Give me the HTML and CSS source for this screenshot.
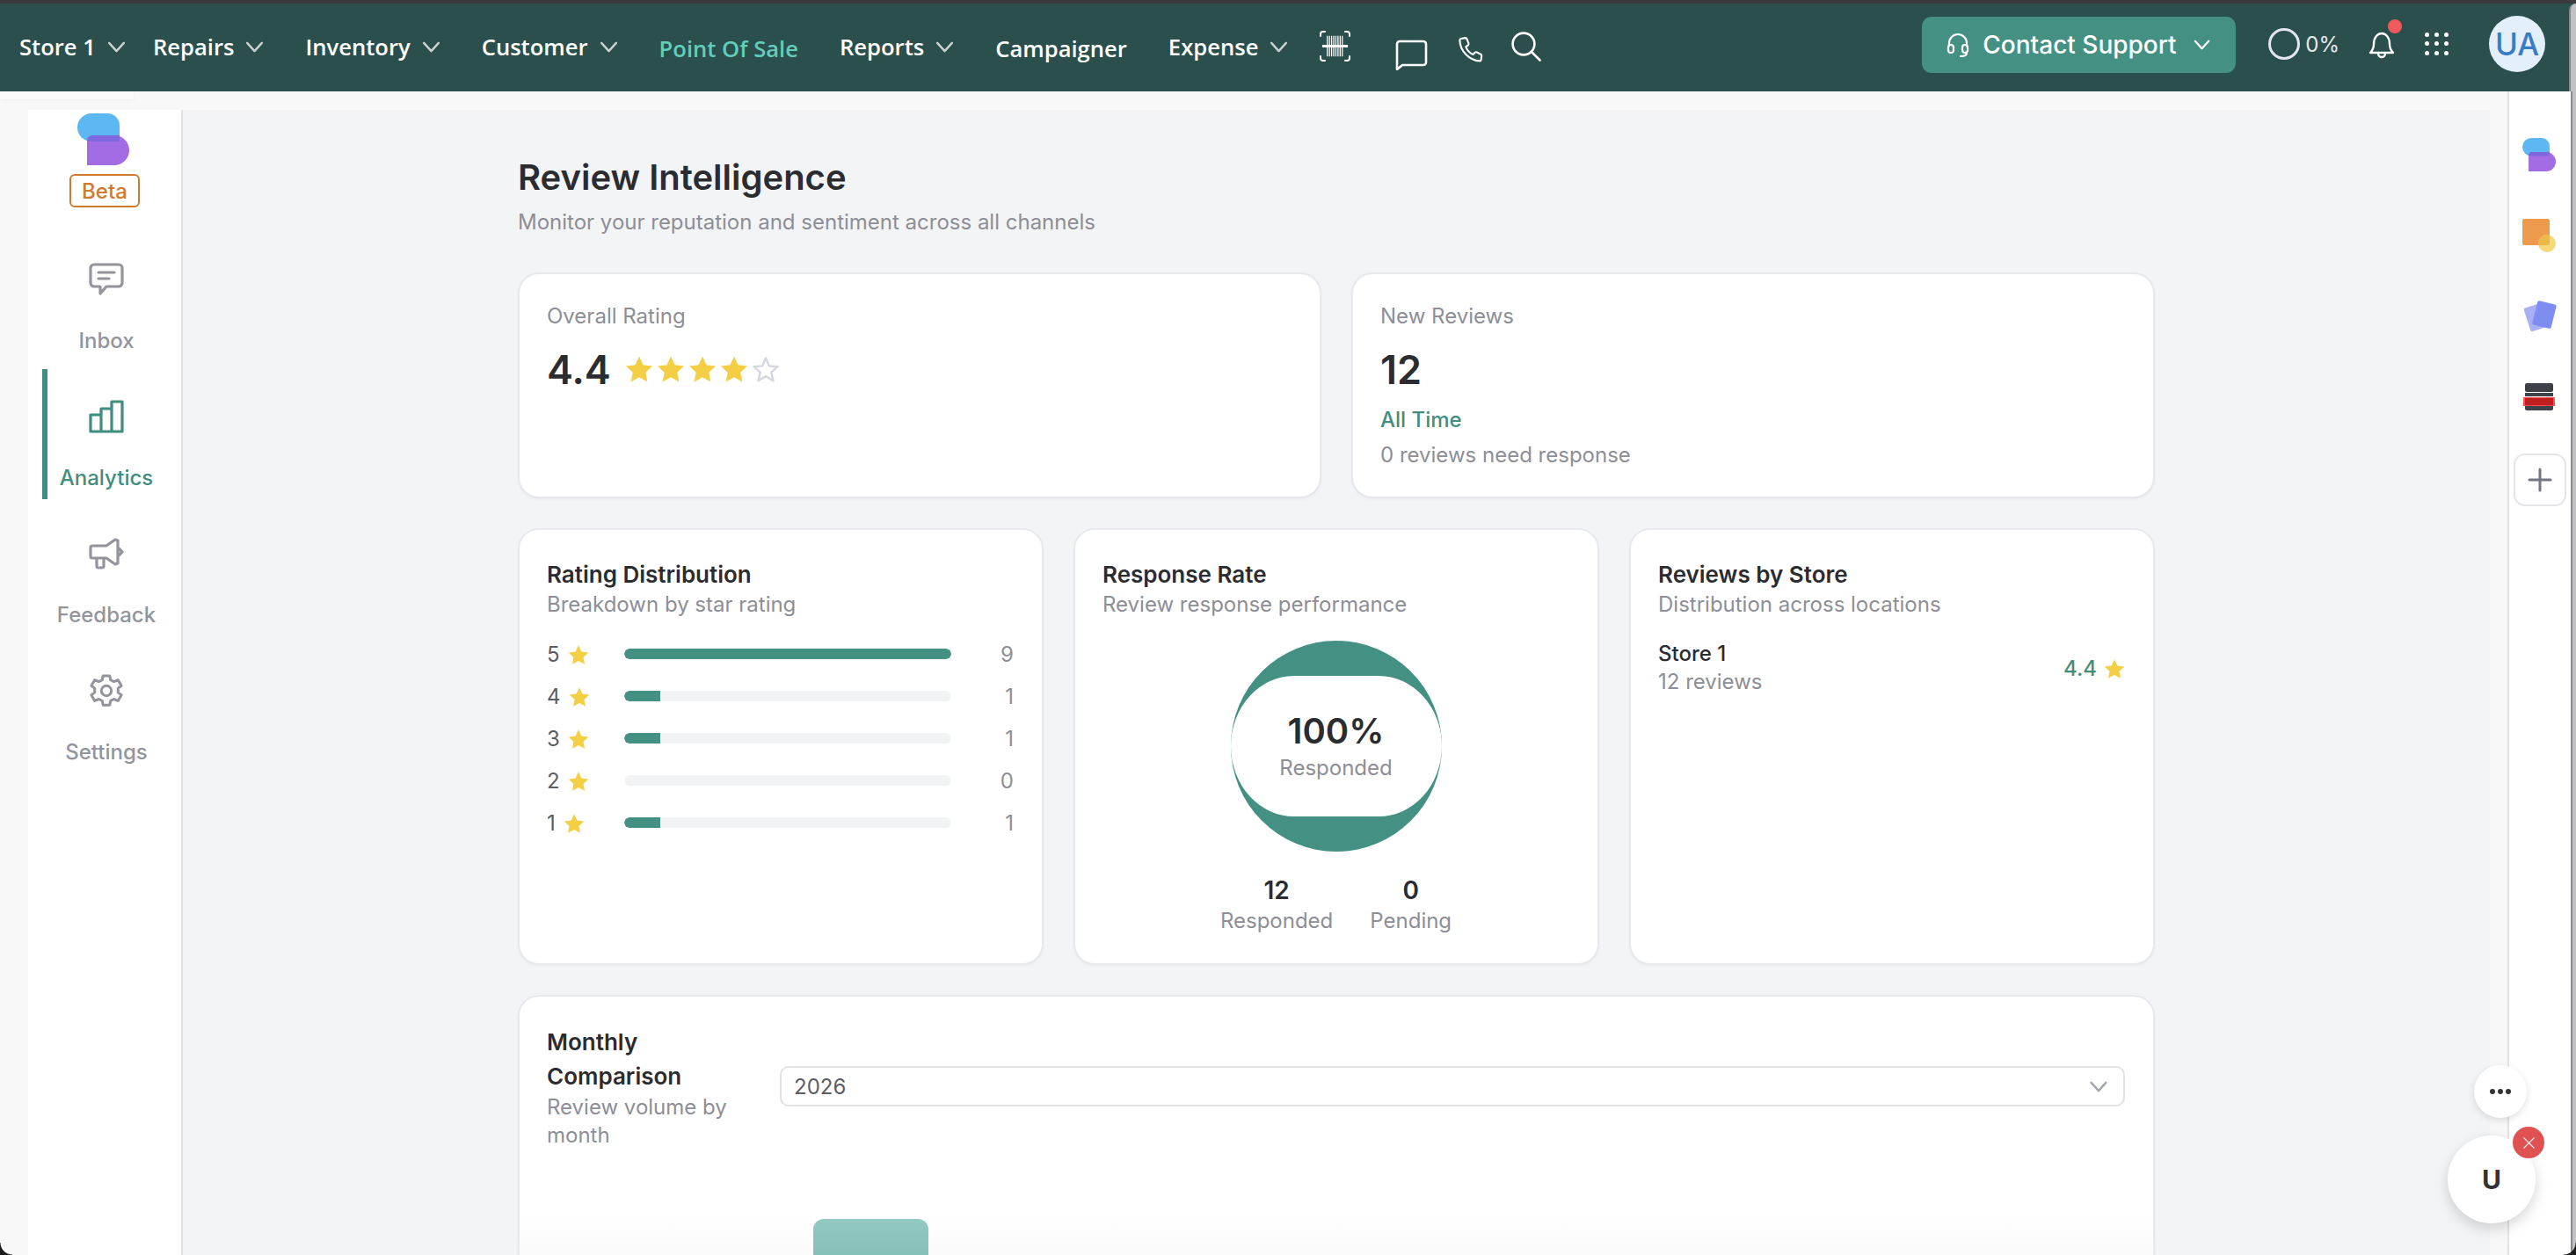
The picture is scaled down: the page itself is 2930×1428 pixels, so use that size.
FILE: index.html
```html
<!DOCTYPE html>
<html lang="en">
<head>
  <meta charset="UTF-8">
  <meta name="viewport" content="width=device-width, initial-scale=1.0">
  <title>Review Intelligence</title>
  <link rel="stylesheet" href="styles.css">
</head>
<body>
  <svg class="defs" width="0" height="0">
    <symbol id="chev" viewBox="0 0 22 14"><path d="M2 2l9 10 9-10" fill="none" stroke="currentColor" stroke-width="2.6" stroke-linecap="round" stroke-linejoin="round"/></symbol>
    <symbol id="star" viewBox="0 0 24 24"><path d="M12 1.200l3.400 7.200 7.900 1-5.800 5.500 1.500 7.900-7-3.900-7 3.900 1.500-7.900L.7 9.400l7.900-1z" fill="currentColor"/></symbol>
    <symbol id="bubbles" viewBox="0 0 59 59">
      <path d="M16 0h18a14 14 0 0 1 14 14v18H16a16 16 0 0 1 0-32z" fill="#5db7f3"/>
      <path d="M17 25h25a17 17 0 0 1 0 34H11V31a6 6 0 0 1 6-6z" fill="#a36ce4"/>
      <path d="M11 32v-1a6 6 0 0 1 6-6h31v7z" fill="#7f67dd"/>
    </symbol>
  </svg>

  <header class="topbar">
    <nav class="nav">
      <div class="nav__item nav__item--store">Store 1 <svg class="chev"><use href="#chev"/></svg></div>
      <div class="nav__item">Repairs <svg class="chev"><use href="#chev"/></svg></div>
      <div class="nav__item">Inventory <svg class="chev"><use href="#chev"/></svg></div>
      <div class="nav__item">Customer <svg class="chev"><use href="#chev"/></svg></div>
      <div class="nav__item nav__item--active">Point Of Sale</div>
      <div class="nav__item">Reports <svg class="chev"><use href="#chev"/></svg></div>
      <div class="nav__item">Campaigner</div>
      <div class="nav__item">Expense <svg class="chev"><use href="#chev"/></svg></div>
      <div class="nav__icons">
        <svg class="icon-scan" viewBox="0 0 36 36" fill="none" stroke="#fff" stroke-width="2">
          <path d="M1 7V4a3 3 0 0 1 3-3h3M29 1h3a3 3 0 0 1 3 3v3M35 29v3a3 3 0 0 1-3 3h-3M7 35H4a3 3 0 0 1-3-3v-3"/>
          <path d="M9 6v24M11.500 6v24M14 6v24M16.500 6v24M19 6v24M21.500 6v24M24 6v24M26.500 6v24" stroke-width="1.300"/>
          <path d="M3 18h30" stroke-width="3"/>
        </svg>
        <svg class="icon-chat" viewBox="0 0 37 35" fill="none" stroke="#fff" stroke-width="2.6" stroke-linejoin="round">
          <path d="M2 5a3 3 0 0 1 3-3h27a3 3 0 0 1 3 3v21a3 3 0 0 1-3 3H8l-6 5z"/>
        </svg>
        <svg class="icon-phone" viewBox="0 0 30 30" fill="none" stroke="#fff" stroke-width="2.2" stroke-linejoin="round">
          <path d="M3 2l5-.8c1 0 1.500.5 1.800 1.300l2 5.200c.3.8 0 1.500-.6 2l-2.600 2c1.500 3.800 4.600 7.200 8.400 9l2.300-2.300c.6-.6 1.300-.7 2-.4l4.800 2.400c.7.400 1 1 1 1.800l-.6 4.800c-.1.800-.8 1.300-1.600 1.300C13 28 1.500 16.500 1.400 3.600 1.400 2.800 2.100 2.200 3 2z"/>
        </svg>
        <svg class="icon-search" viewBox="0 0 34 34" fill="none" stroke="#fff" stroke-width="2.6" stroke-linecap="round">
          <circle cx="14" cy="14" r="12.400"/><path d="M23 23l9.500 9.500"/>
        </svg>
      </div>
    </nav>
    <div class="topbar__right">
      <button class="support">
        <svg class="support__icon" viewBox="0 0 26 28" fill="none" stroke="#fff" stroke-width="2.200" stroke-linecap="round">
          <path d="M3 15V12a10 10 0 0 1 20 0v3"/>
          <rect x="2" y="14" width="6" height="9" rx="3"/><rect x="18" y="14" width="6" height="9" rx="3"/>
          <path d="M23 23c0 3-3 4-7 4"/>
        </svg>
        <span>Contact Support</span>
        <svg class="support__chev"><use href="#chev"/></svg>
      </button>
      <div class="progress"><span class="progress__ring"></span><span class="progress__text">0%</span></div>
      <div class="bell">
        <svg viewBox="0 0 30 33" fill="none" stroke="#fff" stroke-width="2.400" stroke-linejoin="round">
          <path d="M2 26c3-3 4-5 4-10 0-7 4-12 9-12s9 5 9 12c0 5 1 7 4 10z"/>
          <path d="M11 27a4 4 0 0 0 8 0"/>
        </svg>
        <span class="bell__dot"></span>
      </div>
      <div class="apps">
        <i></i><i></i><i></i><i></i><i></i><i></i><i></i><i></i><i></i>
      </div>
      <div class="avatar">UA</div>
    </div>
  </header>

  <div class="page">
    <div class="workspace">
      <aside class="sidebar">
        <div class="brand">
          <svg class="brand__logo"><use href="#bubbles"/></svg>
          <span class="brand__beta">Beta</span>
        </div>
        <a class="side-item">
          <svg viewBox="0 0 40 38" fill="none" stroke="currentColor" stroke-width="3.200" stroke-linecap="round" stroke-linejoin="round">
            <path d="M6 2h28a4 4 0 0 1 4 4v17a4 4 0 0 1-4 4H20l-7 8v-8H6a4 4 0 0 1-4-4V6a4 4 0 0 1 4-4z"/>
            <path d="M11 11h18M11 18h12"/>
          </svg>
          <span>Inbox</span>
        </a>
        <a class="side-item side-item--active">
          <svg viewBox="0 0 40 38" fill="none" stroke="currentColor" stroke-width="3.200" stroke-linejoin="round">
            <path d="M2 17h12v19H2zM14 10h12v26H14zM26 2h12v34H26z"/>
          </svg>
          <span>Analytics</span>
        </a>
        <a class="side-item">
          <svg viewBox="0 0 40 38" fill="none" stroke="currentColor" stroke-width="3.200" stroke-linejoin="round">
            <path d="M4 10h16l10-7 3 1v26l-3 1-10-7H4a2 2 0 0 1-2-2V12a2 2 0 0 1 2-2zM33 12l5 5-5 5"/>
            <path d="M9 24v9a2 2 0 0 0 2 2h4a2 2 0 0 0 2-2v-9"/>
          </svg>
          <span>Feedback</span>
        </a>
        <a class="side-item">
          <svg viewBox="0 0 40 40" fill="none" stroke="currentColor" stroke-width="3.200" stroke-linejoin="round">
            <circle cx="20" cy="20" r="6"/>
            <path d="M16 2h8l1 5 4 2 5-2 4 7-4 3v5l4 3-4 7-5-2-4 2-1 5h-8l-1-5-4-2-5 2-4-7 4-3v-5l-4-3 4-7 5 2 4-2z"/>
          </svg>
          <span>Settings</span>
        </a>
      </aside>

      <main class="main">
        <div class="content">
          <h1 class="page-title">Review Intelligence</h1>
          <p class="page-sub">Monitor your reputation and sentiment across all channels</p>

          <div class="grid grid--two">
            <section class="card card--stat">
              <div class="stat__label">Overall Rating</div>
              <div class="rating">
                <span class="rating__value">4.4</span>
                <span class="rating__stars">
                  <svg class="star"><use href="#star"/></svg>
                  <svg class="star"><use href="#star"/></svg>
                  <svg class="star"><use href="#star"/></svg>
                  <svg class="star"><use href="#star"/></svg>
                  <svg class="star-empty" viewBox="0 0 24 24"><path d="M12 2.500l2.900 6.800 7.300.6-5.500 4.800 1.700 7.200-6.400-3.800-6.400 3.800 1.700-7.200-5.500-4.800 7.300-.6z" fill="none" stroke="#d5d7de" stroke-width="1.800" stroke-linejoin="round"/></svg>
                </span>
              </div>
            </section>
            <section class="card card--stat">
              <div class="stat__label">New Reviews</div>
              <div class="stat__number">12</div>
              <div class="stat__link">All Time</div>
              <div class="stat__note">0 reviews need response</div>
            </section>
          </div>

          <div class="grid grid--three">
            <section class="card">
              <h2 class="card__title">Rating Distribution</h2>
              <p class="card__sub">Breakdown by star rating</p>
              <div class="dist">
                <div class="dist__row">
                  <span class="dist__label">5 <svg class="dist__star"><use href="#star"/></svg></span>
                  <span class="dist__track"><span class="dist__fill" style="width: 100%"></span></span>
                  <span class="dist__count">9</span>
                </div>
                <div class="dist__row">
                  <span class="dist__label">4 <svg class="dist__star"><use href="#star"/></svg></span>
                  <span class="dist__track"><span class="dist__fill" style="width: 11.1%"></span></span>
                  <span class="dist__count">1</span>
                </div>
                <div class="dist__row">
                  <span class="dist__label">3 <svg class="dist__star"><use href="#star"/></svg></span>
                  <span class="dist__track"><span class="dist__fill" style="width: 11.1%"></span></span>
                  <span class="dist__count">1</span>
                </div>
                <div class="dist__row">
                  <span class="dist__label">2 <svg class="dist__star"><use href="#star"/></svg></span>
                  <span class="dist__track"></span>
                  <span class="dist__count">0</span>
                </div>
                <div class="dist__row">
                  <span class="dist__label">1 <svg class="dist__star"><use href="#star"/></svg></span>
                  <span class="dist__track"><span class="dist__fill" style="width: 11.1%"></span></span>
                  <span class="dist__count">1</span>
                </div>
              </div>
            </section>

            <section class="card">
              <h2 class="card__title">Response Rate</h2>
              <p class="card__sub">Review response performance</p>
              <div class="donut">
                <div class="donut__inner">
                  <span class="donut__value">100%</span>
                  <span class="donut__label">Responded</span>
                </div>
              </div>
              <div class="split">
                <div class="split__col"><strong>12</strong><span>Responded</span></div>
                <div class="split__col"><strong>0</strong><span>Pending</span></div>
              </div>
            </section>

            <section class="card">
              <h2 class="card__title">Reviews by Store</h2>
              <p class="card__sub">Distribution across locations</p>
              <div class="store-row">
                <div>
                  <div class="store-row__name">Store 1</div>
                  <div class="store-row__count">12 reviews</div>
                </div>
                <div class="store-row__score">4.4 <svg class="dist__star"><use href="#star"/></svg></div>
              </div>
            </section>
          </div>

          <section class="card card--monthly">
            <div class="monthly__head">
              <div class="monthly__text">
                <h2 class="monthly__title">Monthly Comparison</h2>
                <p class="monthly__sub">Review volume by month</p>
              </div>
              <div class="select">
                <span>2026</span>
                <svg class="select__chev"><use href="#chev"/></svg>
              </div>
            </div>
            <div class="chart">
              <div class="chart__bar"></div>
            </div>
          </section>
        </div>
      </main>
    </div>

    <aside class="rail">
      <svg class="rail__icon"><use href="#bubbles"/></svg>
      <svg class="rail__icon rail__icon--square" viewBox="0 0 38 38">
        <rect width="31" height="30" rx="2" fill="#ee9a4d"/>
        <circle cx="28" cy="28" r="10" fill="#f4d672" opacity=".95"/>
        <path d="M18.200 30A10 10 0 0 1 31 18.500V28a2 2 0 0 1-2 2z" fill="#ebb84a"/>
      </svg>
      <svg class="rail__icon rail__icon--cards" viewBox="0 0 38 37">
        <rect x="3" y="6" width="22" height="28" rx="2" fill="#a8b0f6" transform="rotate(-18 14 20)"/>
        <rect x="12" y="3" width="22" height="28" rx="2" fill="#7f8cf0" transform="rotate(14 23 17)"/>
      </svg>
      <svg class="rail__icon rail__icon--stack" viewBox="0 0 36 31">
        <rect x="2" width="32" height="10" rx="2" fill="#3e4149"/>
        <rect x="2" y="11" width="32" height="4" fill="#3e4149"/>
        <rect x="2" y="24" width="32" height="7" rx="2" fill="#3e4149"/>
        <rect y="16" width="36" height="10" fill="#ff4c4c"/>
        <rect x="2" y="17" width="32" height="8" fill="#bd1f1f"/>
      </svg>
      <div class="rail__add">
        <svg viewBox="0 0 28 28" fill="none" stroke="#737680" stroke-width="3" stroke-linecap="round"><path d="M14 2v24M2 14h24"/></svg>
      </div>
    </aside>
    <div class="edge"></div>
  </div>

  <div class="fab-more"><i></i><i></i><i></i></div>
  <div class="fab-user">U</div>
  <div class="fab-close">
    <svg viewBox="0 0 16 16" fill="none" stroke="#fff" stroke-width="1.400" stroke-linecap="round"><path d="M2 2l12 12M14 2L2 14"/></svg>
  </div>
  <div class="corner corner--left"></div>
  <div class="corner corner--right"></div>
</body>
</html>
```

FILE: styles.css
```css
* {
  box-sizing: border-box;
}
html, body {
  margin: 0;
  height: 100%;
}
body {
  position: relative;
  width: 2930px;
  height: 1428px;
  overflow: hidden;
  font-family: Inter, "Noto Sans", sans-serif;
  font-size: 24px;
  color: #2b2c30;
  background: #f3f4f6;
  display: flex;
  flex-direction: column;
}
h1, h2, p {
  margin: 0;
}
.defs {
  position: absolute;
}

/* top bar */
.topbar {
  position: relative;
  z-index: 2;
  flex: none;
  height: 104px;
  border-top: 4px solid #3b3b3b;
  background: #2a4f4d;
  display: flex;
  align-items: center;
  justify-content: space-between;
  padding-left: 22px;
}
.topbar::before {
  content: "";
  position: absolute;
  top: 0;
  right: 0;
  bottom: 0;
  width: 6px;
  border-left: 2px solid #8a8a8c;
  border-top-left-radius: 8px;
  background: #c2c2c6;
}
.topbar::after {
  content: "";
  position: absolute;
  top: 100%;
  left: 0;
  width: 152px;
  height: 9px;
  background: #fbfbfb;
  box-shadow: 0 2px 4px rgba(0, 0, 0, .04);
}
.nav {
  display: flex;
  align-items: center;
  height: 100%;
  font-family: "Open Sans", sans-serif;
  font-weight: 600;
  font-size: 25.600px;
  color: #fff;
}
.nav__item {
  display: flex;
  align-items: center;
  gap: 13px;
  margin-right: 47px;
  white-space: nowrap;
  margin-top: -1px;
}
.nav__item--store {
  margin-right: 31px;
}
.nav__item--active {
  color: #62cdb8;
  margin-top: 3px;
}
.nav__item:nth-child(7) {
  margin-top: 3px;
}
.chev {
  width: 21px;
  height: 13px;
  color: #c9d2d1;
}
.nav__icons {
  display: flex;
  align-items: center;
  margin-left: -11px;
}
.icon-scan {
  width: 35px;
  height: 35px;
  margin-top: -4px;
}
.icon-chat {
  width: 37px;
  height: 35px;
  margin-left: 51px;
  margin-top: 17px;
}
.icon-phone {
  width: 29px;
  height: 29px;
  margin-left: 35px;
  margin-top: 5px;
}
.icon-search {
  width: 34px;
  height: 34px;
  margin-left: 31px;
  margin-top: -2px;
}
.topbar__right {
  display: flex;
  align-items: center;
  height: 100%;
  padding-right: 35px;
}
.support {
  width: 357px;
  height: 64px;
  margin-top: -6px;
  border: 0;
  border-radius: 11px;
  background: #449184;
  color: #fff;
  font-family: Inter, sans-serif;
  font-weight: 500;
  font-size: 28px;
  display: flex;
  align-items: center;
  padding: 0 0 0 28px;
}
.support__icon {
  width: 26px;
  height: 28px;
  margin-right: 15px;
}
.support__chev {
  width: 19px;
  height: 12px;
  margin-left: 19px;
}
.progress {
  display: flex;
  align-items: center;
  gap: 6px;
  margin-left: 37px;
  margin-top: -8px;
  color: #e7e8ee;
  font-size: 24px;
}
.progress__ring {
  width: 36px;
  height: 36px;
  border: 3.500px solid #e4e6ef;
  border-radius: 50%;
}
.bell {
  position: relative;
  width: 30px;
  height: 33px;
  margin-left: 33px;
  margin-top: -8px;
}
.bell svg {
  width: 30px;
  height: 33px;
  display: block;
}
.bell__dot {
  position: absolute;
  top: -12px;
  left: 22px;
  width: 16px;
  height: 16px;
  border-radius: 50%;
  background: #ef5b5b;
}
.apps {
  width: 33px;
  height: 32px;
  margin-left: 31px;
  margin-right: -2px;
  margin-top: -8px;
  display: grid;
  grid-template-columns: repeat(3, 1fr);
  align-items: center;
  justify-items: center;
}
.apps i {
  width: 5px;
  height: 5px;
  border-radius: 50%;
  background: #fff;
}
.avatar {
  width: 64px;
  height: 64px;
  margin-left: 45px;
  margin-top: -8px;
  border-radius: 50%;
  background: #e3f0fb;
  color: #3a7cc4;
  font-size: 35px;
  font-weight: 500;
  display: flex;
  align-items: center;
  justify-content: center;
}

/* page frame */
.page {
  flex: 1;
  min-height: 0;
  display: flex;
}
.workspace {
  flex: 1;
  min-width: 0;
  display: flex;
  padding: 21px 20px 0 32px;
  background: #f8f8f8;
}
.sidebar {
  flex: none;
  width: 176px;
  background: #fff;
  border-right: 2px solid #dfe1e7;
  position: relative;
}
.brand {
  height: 154px;
  padding-top: 4px;
  display: flex;
  flex-direction: column;
  align-items: center;
}
.brand__logo {
  width: 59px;
  height: 59px;
  margin-left: -3px;
}
.brand__beta {
  width: 80px;
  height: 38px;
  margin-top: 10px;
  border: 2px solid #cf7a2e;
  border-radius: 6px;
  color: #cf7a2e;
  font-size: 24px;
  font-weight: 500;
  display: flex;
  align-items: center;
  justify-content: center;
}
.side-item {
  position: relative;
  height: 156px;
  padding-top: 20px;
  display: flex;
  flex-direction: column;
  align-items: center;
  gap: 36px;
  color: #93949c;
  font-size: 24px;
  font-weight: 500;
  margin-left: 4px;
}
.side-item svg {
  width: 40px;
  height: 38px;
}
.side-item--active {
  color: #3f8e80;
}
.side-item--active::before {
  content: "";
  position: absolute;
  left: 12px;
  top: -15px;
  width: 6px;
  height: 148px;
  background: #3f8e80;
}
.main {
  flex: 1;
  min-width: 0;
  background: #f3f4f6;
  padding-top: 53px;
}
.content {
  width: 1862px;
  margin: 0 auto;
}
.page-title {
  font-size: 40px;
  line-height: 48px;
  font-weight: 600;
}
.page-sub {
  margin-top: 10px;
  color: #8d8e96;
  font-size: 24px;
  line-height: 34px;
}

/* cards */
.grid {
  display: grid;
  gap: 34px;
  margin-bottom: 34px;
}
.grid--two {
  margin-top: 40px;
  grid-template-columns: repeat(2, 1fr);
  grid-template-rows: 257px;
}
.grid--three {
  grid-template-columns: repeat(3, 1fr);
  grid-template-rows: 497px;
}
.card {
  background: #fff;
  border: 2px solid #e8e9ed;
  border-radius: 24px;
  padding: 33px 32px 0 31px;
  box-shadow: 0 1px 3px rgba(30, 30, 50, .05);
}
.card--stat {
  padding-top: 32px;
}
.stat__label {
  color: #8d8e96;
  line-height: 32px;
}
.rating {
  display: flex;
  align-items: center;
  margin-top: 20px;
  height: 48px;
}
.rating__value {
  font-size: 45px;
  font-weight: 600;
}
.rating__stars {
  display: flex;
  margin-left: 16px;
  gap: 4px;
}
.star,
.star-empty {
  width: 32px;
  height: 32px;
  color: #f4cf45;
}
.stat__number {
  margin-top: 19px;
  font-size: 45px;
  font-weight: 600;
  line-height: 52px;
}
.stat__link {
  margin-top: 15px;
  color: #3f8e80;
  line-height: 32px;
  font-weight: 500;
}
.stat__note {
  margin-top: 8px;
  color: #8d8e96;
  line-height: 32px;
}
.card__title {
  font-size: 26px;
  font-weight: 600;
  line-height: 36px;
}
.card__sub {
  color: #8d8e96;
  line-height: 34px;
  margin-top: -1px;
}
.dist {
  margin-top: 15px;
}
.dist__row {
  height: 48px;
  display: flex;
  align-items: center;
}
.dist__label {
  width: 88px;
  display: flex;
  align-items: center;
  gap: 9px;
  color: #5c5d64;
}
.dist__star {
  width: 24px;
  height: 24px;
  color: #f4cf45;
  margin-top: 2px;
}
.dist__track {
  width: 372px;
  height: 12px;
  border-radius: 6px;
  background: #f2f3f5;
  overflow: hidden;
}
.dist__fill {
  display: block;
  height: 100%;
  background: #449184;
  border-radius: 6px 0 0 6px;
}
.dist__fill[style="width: 100%"] {
  border-radius: 6px;
}
.dist__count {
  flex: 1;
  text-align: right;
  color: #8d8e96;
}
.donut {
  width: 240px;
  height: 240px;
  margin: 24px auto 0;
  border-radius: 50%;
  background: #449184;
  display: flex;
  align-items: center;
  justify-content: center;
}
.donut__inner {
  width: 240px;
  height: 160px;
  border-radius: 72px / 80px;
  background: #fff;
  display: flex;
  flex-direction: column;
  align-items: center;
  justify-content: center;
}
.donut__value {
  font-size: 40px;
  font-weight: 600;
  line-height: 48px;
}
.donut__label {
  color: #8d8e96;
  line-height: 34px;
  margin-top: 1px;
}
.split {
  display: flex;
  justify-content: center;
  gap: 42px;
  margin-top: 26px;
}
.split__col {
  display: flex;
  flex-direction: column;
  align-items: center;
}
.split__col strong {
  font-size: 28px;
  font-weight: 600;
  line-height: 36px;
}
.split__col span {
  color: #8d8e96;
  line-height: 34px;
}
.store-row {
  display: flex;
  align-items: center;
  justify-content: space-between;
  margin-top: 23px;
}
.store-row__name {
  font-weight: 500;
  line-height: 32px;
}
.store-row__count {
  color: #8d8e96;
  line-height: 32px;
}
.store-row__score {
  display: flex;
  align-items: center;
  gap: 8px;
  color: #3f8e80;
  font-weight: 500;
}
.card--monthly {
  height: 340px;
  padding-top: 30px;
  background: linear-gradient(#fff 73%, #fbfbfb 87%);
  position: relative;
}
.monthly__head {
  display: flex;
  align-items: flex-start;
  gap: 44px;
}
.monthly__text {
  width: 221px;
  flex: none;
  padding-top: 2px;
}
.monthly__title {
  font-size: 26px;
  font-weight: 600;
  line-height: 39px;
}
.monthly__sub {
  color: #8d8e96;
  line-height: 32px;
}
.select {
  flex: 1;
  height: 46px;
  margin-top: 49px;
  border: 2px solid #e0e1e7;
  border-radius: 10px;
  background: #fff;
  color: #5c5d64;
  display: flex;
  align-items: center;
  justify-content: space-between;
  padding: 0 17px 0 14px;
}
.select__chev {
  width: 22px;
  height: 13px;
  color: #a3a5ad;
}
.chart {
  margin-top: 79px;
  padding-left: 303px;
}
.chart__bar {
  width: 131px;
  height: 80px;
  border-radius: 12px 12px 0 0;
  background: linear-gradient(#92cac1, #78b5aa);
}

/* right rail */
.rail {
  flex: none;
  width: 72px;
  border-left: 2px solid #e4e4e8;
  background: #fff;
  padding-top: 53px;
  display: flex;
  flex-direction: column;
  align-items: center;
}
.rail__icon {
  width: 38px;
  height: 38px;
  margin-left: -2px;
}
.rail__icon--square {
  margin-top: 54px;
}
.rail__icon--cards {
  margin-top: 54px;
  margin-left: 1px;
  height: 37px;
}
.rail__icon--stack {
  margin-top: 58px;
  height: 31px;
  width: 36px;
}
.rail__add {
  width: 60px;
  height: 60px;
  margin-top: 49px;
  border: 2px solid #e4e5e9;
  border-radius: 13px;
  display: flex;
  align-items: center;
  justify-content: center;
}
.rail__add svg {
  width: 28px;
  height: 28px;
}
.edge {
  flex: none;
  width: 6px;
  border-left: 2px solid #8a8a8c;
  background: #c2c2c6;
}

/* floating buttons */
.fab-more {
  position: absolute;
  left: 2814px;
  top: 1212px;
  width: 60px;
  height: 60px;
  border-radius: 50%;
  background: #fff;
  box-shadow: 0 3px 8px rgba(0, 0, 0, .12);
  display: flex;
  align-items: center;
  justify-content: center;
  gap: 3px;
}
.fab-more i {
  width: 6px;
  height: 6px;
  border-radius: 50%;
  background: #333;
}
.fab-user {
  position: absolute;
  left: 2784px;
  top: 1292px;
  width: 100px;
  height: 100px;
  border-radius: 50%;
  background: #fff;
  box-shadow: 0 6px 16px rgba(0, 0, 0, .16);
  display: flex;
  align-items: center;
  justify-content: center;
  font-size: 30px;
  font-weight: 700;
  color: #333;
}
.fab-close {
  position: absolute;
  left: 2858px;
  top: 1282px;
  width: 36px;
  height: 36px;
  border-radius: 50%;
  background: #e05252;
  display: flex;
  align-items: center;
  justify-content: center;
}
.fab-close svg {
  width: 15px;
  height: 15px;
}
.corner {
  position: absolute;
  bottom: 0;
  width: 14px;
  height: 14px;
}
.corner--left {
  left: 0;
  background: radial-gradient(circle at top right, transparent 13px, #1b1b1b 14px);
}
.corner--right {
  right: 0;
  background: radial-gradient(circle at top left, transparent 13px, #1b1b1b 14px);
}
```
